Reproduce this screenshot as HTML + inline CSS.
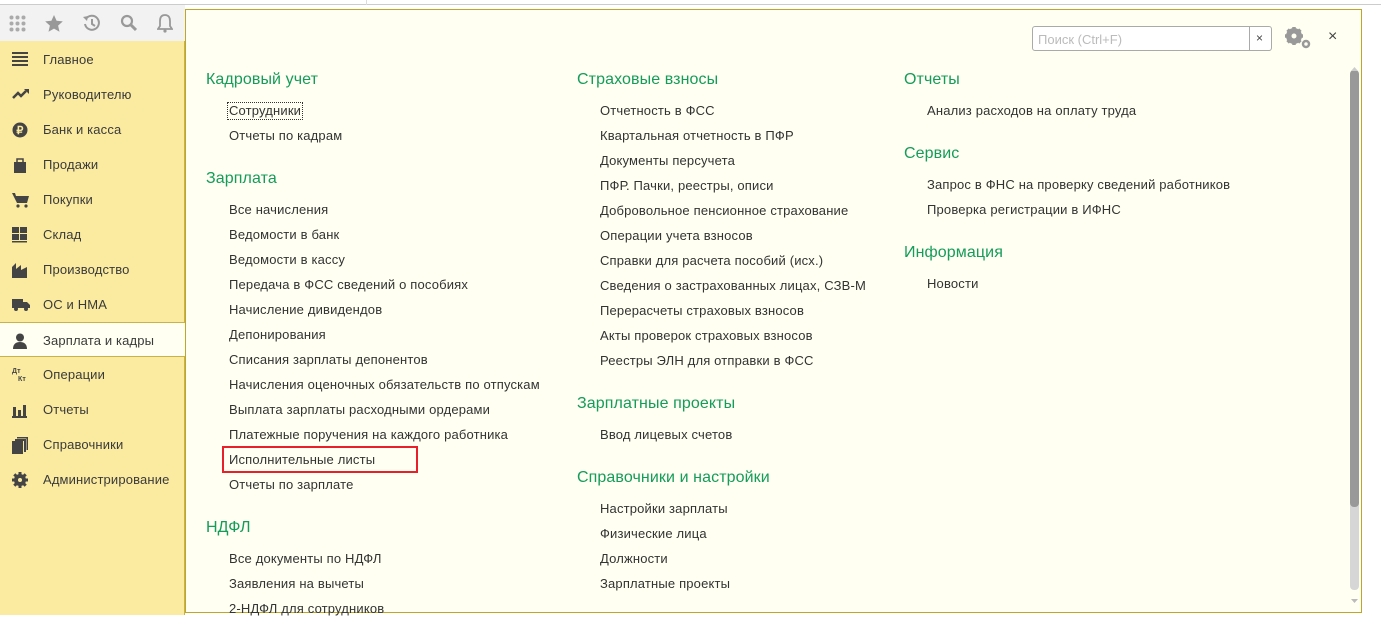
<!DOCTYPE html>
<html><head><meta charset="utf-8"><style>
*{margin:0;padding:0;box-sizing:border-box}
body{width:1381px;height:615px;overflow:hidden;background:#fff;font-family:"Liberation Sans",Arial,sans-serif;position:relative;color:#333}
.top{position:absolute;left:0;top:0;width:1381px;height:5px;border-bottom:1px solid #ccc;background:#fff}
.tb{position:absolute;left:0;top:5px;width:185px;height:36px;background:#f2f2f2}
.side{position:absolute;left:0;top:41px;width:185px;height:574px;background:#fbeba0;border-right:1px solid #c9b24a}
.si{position:absolute;left:0;width:185px;height:35px;font-size:13px;line-height:35px;padding-left:43px;color:#3a3a3a;letter-spacing:.15px}
.si svg{position:absolute;left:12px;top:10px}
.sel{background:#fffff2;border-top:1px solid #c9b24a;border-bottom:1px solid #c9b24a;width:186px}
.panel{position:absolute;left:185px;top:9px;width:1177px;height:604px;background:#fffff2;border:1px solid #bfa62a}
.t{position:absolute;font-size:13px;line-height:16px;white-space:nowrap;color:#333;letter-spacing:.17px;margin-top:1px}
.h{position:absolute;font-size:16px;line-height:20px;color:#149c5a;white-space:nowrap;letter-spacing:.1px;margin-top:1px}
</style></head><body>
<div class="top"></div>
<div style="position:absolute;left:366px;top:0;width:1px;height:5px;background:#ddd"></div>
<div class="tb">
<svg style="position:absolute;left:9px;top:10px" width="17" height="17"><g fill="#aaa"><circle cx="2.5" cy="2.5" r="2"/><circle cx="8.5" cy="2.5" r="2"/><circle cx="14.5" cy="2.5" r="2"/><circle cx="2.5" cy="8.5" r="2"/><circle cx="8.5" cy="8.5" r="2"/><circle cx="14.5" cy="8.5" r="2"/><circle cx="2.5" cy="14.5" r="2"/><circle cx="8.5" cy="14.5" r="2"/><circle cx="14.5" cy="14.5" r="2"/></g></svg>
<svg style="position:absolute;left:45px;top:10px" width="18" height="17"><path d="M9 0l2.6 5.8 6.2.6-4.7 4.2 1.4 6.2L9 13.6 3.5 16.8l1.4-6.2L.2 6.4l6.2-.6z" fill="#999"/></svg>
<svg style="position:absolute;left:82px;top:9px" width="18" height="18"><path d="M4 5a7 7 0 1 1-1 5" fill="none" stroke="#999" stroke-width="2"/><path d="M1 3l4 4 1-5z" fill="#999"/><path d="M10 5v5l3 2" fill="none" stroke="#999" stroke-width="2"/></svg>
<svg style="position:absolute;left:120px;top:9px" width="18" height="18"><circle cx="7" cy="7" r="5" fill="none" stroke="#999" stroke-width="2.2"/><path d="M11 11l5 5" stroke="#999" stroke-width="3"/></svg>
<svg style="position:absolute;left:157px;top:9px" width="16" height="19"><path d="M8 1c-4 0-5 3-5 6v5l-2 3h14l-2-3V7c0-3-1-6-5-6z" fill="none" stroke="#999" stroke-width="1.8"/><circle cx="8" cy="17" r="1.6" fill="#999"/></svg>
</div>
<div class="side">
<div class="si" style="top:1px"><svg width="16" height="14"><g fill="#444"><rect y="0" width="16" height="2"/><rect y="4" width="16" height="2"/><rect y="8" width="16" height="2"/><rect y="12" width="16" height="2"/></g></svg>Главное</div>
<div class="si" style="top:36px"><svg width="18" height="14"><path d="M1 11l5-5 3 3 5-5" fill="none" stroke="#444" stroke-width="2.5"/><path d="M12 2h5v5z" fill="#444"/></svg>Руководителю</div>
<div class="si" style="top:71px"><svg width="16" height="16"><circle cx="8" cy="8" r="7.5" fill="#444"/><text x="8" y="12" font-size="11" font-weight="bold" fill="#fbeba0" text-anchor="middle" font-family="Liberation Sans">₽</text></svg>Банк и касса</div>
<div class="si" style="top:106px"><svg width="16" height="16"><path d="M2 5h12v11H2z" fill="#444"/><path d="M5 6V2h6v4" fill="none" stroke="#444" stroke-width="1.5"/></svg>Продажи</div>
<div class="si" style="top:141px"><svg width="18" height="16"><path d="M0 1h3l1 3h13l-2 7H5z" fill="#444"/><circle cx="6" cy="14" r="1.6" fill="#444"/><circle cx="14" cy="14" r="1.6" fill="#444"/></svg>Покупки</div>
<div class="si" style="top:176px"><svg width="16" height="16"><g fill="#444"><rect width="7" height="6"/><rect x="8" width="7" height="6"/><rect y="7" width="7" height="6"/><rect x="8" y="7" width="7" height="6"/><rect y="14" width="15" height="1.5"/></g></svg>Склад</div>
<div class="si" style="top:211px"><svg width="16" height="16"><path d="M0 16V5l4-4v6l5-4v5l6-3v11z" fill="#444"/></svg>Производство</div>
<div class="si" style="top:246px"><svg width="18" height="14"><path d="M0 2h11v9H0zM11 5h4l3 3v3h-7z" fill="#444"/><circle cx="4" cy="12" r="2" fill="#444"/><circle cx="14" cy="12" r="2" fill="#444"/></svg>ОС и НМА</div>
<div class="si sel" style="top:281px"><svg width="16" height="16"><circle cx="8" cy="4.5" r="4" fill="#444"/><path d="M1 16c0-5 3-7 7-7s7 2 7 7z" fill="#444"/></svg>Зарплата и кадры</div>
<div class="si" style="top:316px"><svg width="16" height="16"><text x="0" y="6" font-size="7" font-weight="bold" fill="#444" font-family="Liberation Sans">Дт</text><text x="6" y="14" font-size="7" font-weight="bold" fill="#444" font-family="Liberation Sans">Кт</text></svg>Операции</div>
<div class="si" style="top:351px"><svg width="16" height="16"><g fill="#444"><rect x="1" y="5" width="3" height="10"/><rect x="6" y="8" width="3" height="7"/><rect x="11" y="3" width="3" height="12"/><rect y="14" width="15" height="2"/></g></svg>Отчеты</div>
<div class="si" style="top:386px"><svg width="16" height="17"><g fill="#444"><rect x="0" y="4" width="11" height="13"/><rect x="3" y="2" width="11" height="2"/><rect x="12" y="2" width="2" height="13"/><rect x="5" y="0" width="11" height="1.5"/><rect x="14.5" y="0" width="1.5" height="13"/></g></svg>Справочники</div>
<div class="si" style="top:421px"><svg width="16" height="16"><circle cx="8" cy="8" r="4.5" fill="none" stroke="#444" stroke-width="3"/><g stroke="#444" stroke-width="3"><path d="M8 0v16M0 8h16M2.3 2.3l11.4 11.4M13.7 2.3L2.3 13.7"/></g><circle cx="8" cy="8" r="2" fill="#fbeba0"/></svg>Администрирование</div>
</div>
<div class="panel">
<div style="position:absolute;left:846px;top:16px;width:240px;height:25px;border:1px solid #aaa;border-radius:3px;background:#fff"><span style="position:absolute;left:5px;top:5px;font-size:13px;color:#bbb">Поиск (Ctrl+F)</span><div style="position:absolute;left:216px;top:0;width:1px;height:23px;background:#aaa"></div><span style="position:absolute;left:223px;top:4px;font-size:12px;color:#444">×</span></div>
<svg style="position:absolute;left:1098px;top:16px" width="28" height="24"><circle cx="10" cy="10" r="6" fill="none" stroke="#999" stroke-width="4"/><g stroke="#999" stroke-width="3.5"><path d="M10 1v18M1 10h18M3.6 3.6l12.8 12.8M16.4 3.6L3.6 16.4"/></g><circle cx="10" cy="10" r="2.5" fill="#fffff2"/><circle cx="22" cy="18" r="3" fill="none" stroke="#999" stroke-width="2.5"/></svg>
<span style="position:absolute;left:1142px;top:18px;font-size:16px;color:#444">×</span>
<div style="position:absolute;left:1164px;top:470px;width:9px;height:110px;background:#d6d6d6;border-radius:4px"></div>
<div style="position:absolute;left:1164px;top:60px;width:9px;height:437px;background:#999;border-radius:4px"></div>
<svg style="position:absolute;left:1165px;top:56px" width="7" height="5"><path d="M0 5l3.5-4 3.5 4z" fill="#ccc"/></svg>
<svg style="position:absolute;left:1165px;top:589px" width="7" height="5"><path d="M0 0l3.5 4 3.5-4z" fill="#bbb"/></svg>
</div>
<div class="h" style="left:206px;top:69px">Кадровый учет</div>
<div class="t" style="top:102px;outline:1px dotted #333;padding:0 1px;left:228px">Сотрудники</div>
<div class="t" style="left:229px;top:127px">Отчеты по кадрам</div>
<div class="h" style="left:206px;top:168px">Зарплата</div>
<div class="t" style="left:229px;top:201px">Все начисления</div>
<div class="t" style="left:229px;top:226px">Ведомости в банк</div>
<div class="t" style="left:229px;top:251px">Ведомости в кассу</div>
<div class="t" style="left:229px;top:276px">Передача в ФСС сведений о пособиях</div>
<div class="t" style="left:229px;top:301px">Начисление дивидендов</div>
<div class="t" style="left:229px;top:326px">Депонирования</div>
<div class="t" style="left:229px;top:351px">Списания зарплаты депонентов</div>
<div class="t" style="left:229px;top:376px">Начисления оценочных обязательств по отпускам</div>
<div class="t" style="left:229px;top:401px">Выплата зарплаты расходными ордерами</div>
<div class="t" style="left:229px;top:426px">Платежные поручения на каждого работника</div>
<div style="position:absolute;left:222px;top:446px;width:196px;height:27px;border:2px solid #e8202a"></div>
<div class="t" style="left:229px;top:451px">Исполнительные листы</div>
<div class="t" style="left:229px;top:476px">Отчеты по зарплате</div>
<div class="h" style="left:206px;top:517px">НДФЛ</div>
<div class="t" style="left:229px;top:550px">Все документы по НДФЛ</div>
<div class="t" style="left:229px;top:575px">Заявления на вычеты</div>
<div class="t" style="left:229px;top:600px">2-НДФЛ для сотрудников</div>
<div class="h" style="left:577px;top:69px">Страховые взносы</div>
<div class="t" style="left:600px;top:102px">Отчетность в ФСС</div>
<div class="t" style="left:600px;top:127px">Квартальная отчетность в ПФР</div>
<div class="t" style="left:600px;top:152px">Документы персучета</div>
<div class="t" style="left:600px;top:177px">ПФР. Пачки, реестры, описи</div>
<div class="t" style="left:600px;top:202px">Добровольное пенсионное страхование</div>
<div class="t" style="left:600px;top:227px">Операции учета взносов</div>
<div class="t" style="left:600px;top:252px">Справки для расчета пособий (исх.)</div>
<div class="t" style="left:600px;top:277px">Сведения о застрахованных лицах, СЗВ-М</div>
<div class="t" style="left:600px;top:302px">Перерасчеты страховых взносов</div>
<div class="t" style="left:600px;top:327px">Акты проверок страховых взносов</div>
<div class="t" style="left:600px;top:352px">Реестры ЭЛН для отправки в ФСС</div>
<div class="h" style="left:577px;top:393px">Зарплатные проекты</div>
<div class="t" style="left:600px;top:426px">Ввод лицевых счетов</div>
<div class="h" style="left:577px;top:467px">Справочники и настройки</div>
<div class="t" style="left:600px;top:500px">Настройки зарплаты</div>
<div class="t" style="left:600px;top:525px">Физические лица</div>
<div class="t" style="left:600px;top:550px">Должности</div>
<div class="t" style="left:600px;top:575px">Зарплатные проекты</div>
<div class="h" style="left:904px;top:69px">Отчеты</div>
<div class="t" style="left:927px;top:102px">Анализ расходов на оплату труда</div>
<div class="h" style="left:904px;top:143px">Сервис</div>
<div class="t" style="left:927px;top:176px">Запрос в ФНС на проверку сведений работников</div>
<div class="t" style="left:927px;top:201px">Проверка регистрации в ИФНС</div>
<div class="h" style="left:904px;top:242px">Информация</div>
<div class="t" style="left:927px;top:275px">Новости</div>
</body></html>
